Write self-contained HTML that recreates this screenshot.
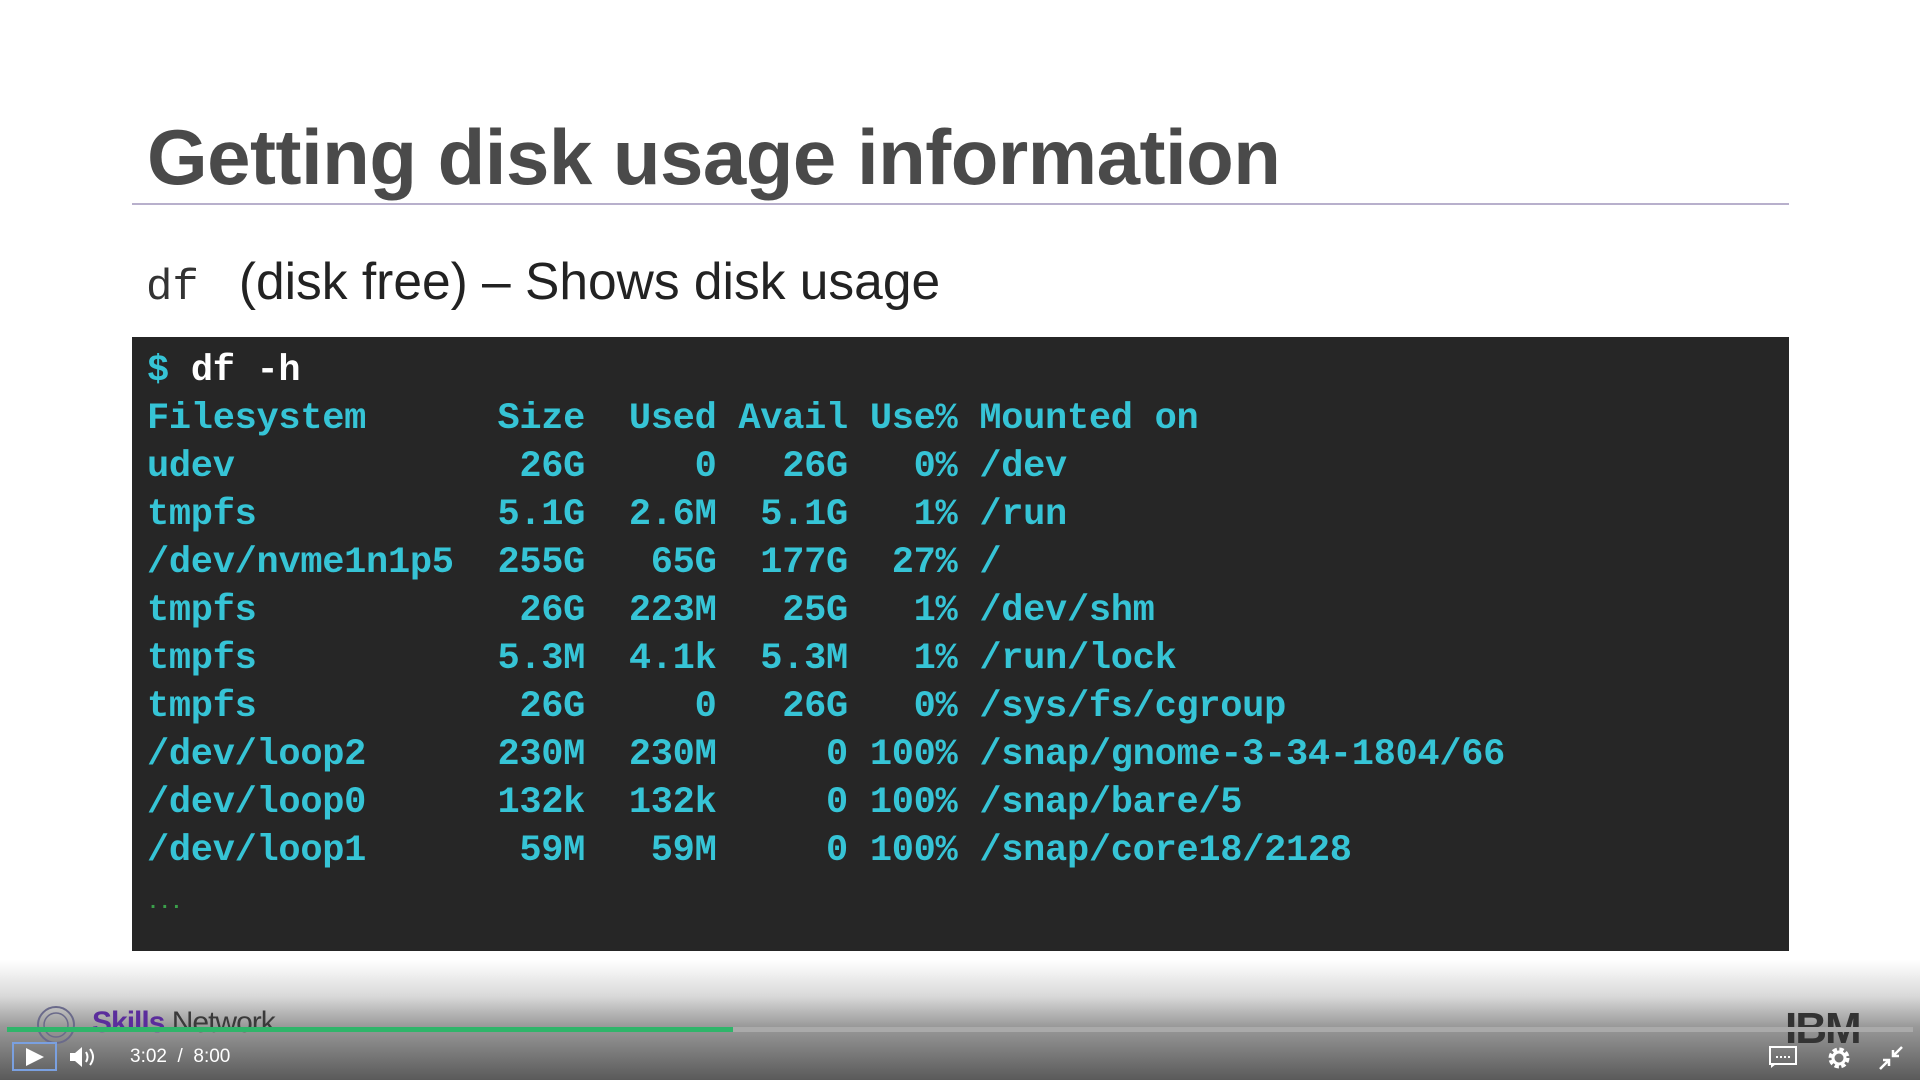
<!DOCTYPE html>
<html><head><style>
*{margin:0;padding:0;box-sizing:border-box}
body{width:1920px;height:1080px;background:#fff;position:relative;overflow:hidden;font-family:"Liberation Sans",sans-serif}
.title{position:absolute;left:147px;top:112px;font-size:78px;font-weight:bold;color:#4a4a4a;letter-spacing:-0.5px}
.rule{position:absolute;left:132px;top:203px;width:1657px;height:2px;background:#b8b0cc}
.sub{position:absolute;left:146px;top:251px;font-size:51.5px;color:#222}
.sub code{font-family:"Liberation Mono",monospace;font-size:44px;color:#333;margin-right:40px}
.term{position:absolute;left:132px;top:337px;width:1657px;height:614px;background:#262626}
pre{position:absolute;left:147px;top:347px;font-family:"Liberation Mono",monospace;font-weight:bold;font-size:37px;letter-spacing:-0.3px;line-height:48px;color:#36c4d6}
.w{color:#fff}
.g{color:#3aa04a;font-size:20px}
.bar{position:absolute;left:0;top:960px;width:1920px;height:120px;background:linear-gradient(#fff0 0%,#d9d9d9 30%,#9a9a9a 55%,#5a5a5a 100%)}
.prog{position:absolute;left:7px;top:1027px;width:1906px;height:5px;background:#aaa}
.prog i{position:absolute;left:0;top:0;width:726px;height:5px;background:#2fb56a}
.ctl{position:absolute;color:#fff;font-size:19px}
</style></head><body>
<div class="title">Getting disk usage information</div>
<div class="rule"></div>
<div class="sub"><code>df</code>(disk free) – Shows disk usage</div>
<div class="term"></div>
<pre><span>$</span> <span class="w">df -h</span>
Filesystem      Size  Used Avail Use% Mounted on
udev             26G     0   26G   0% /dev
tmpfs           5.1G  2.6M  5.1G   1% /run
/dev/nvme1n1p5  255G   65G  177G  27% /
tmpfs            26G  223M   25G   1% /dev/shm
tmpfs           5.3M  4.1k  5.3M   1% /run/lock
tmpfs            26G     0   26G   0% /sys/fs/cgroup
/dev/loop2      230M  230M     0 100% /snap/gnome-3-34-1804/66
/dev/loop0      132k  132k     0 100% /snap/bare/5
/dev/loop1       59M   59M     0 100% /snap/core18/2128
<span class="g">...</span></pre>
<div class="bar"></div>
<svg style="position:absolute;left:36px;top:1003px" width="40" height="44"><circle cx="20" cy="22" r="18" fill="none" stroke="#6a6a8a" stroke-width="2"/><circle cx="20" cy="22" r="12" fill="none" stroke="#6a6a8a" stroke-width="1.5"/></svg>
<div style="position:absolute;left:92px;top:1006px;font-size:30px;font-weight:bold;color:#5b2d9c;letter-spacing:-1px">Skills <span style="color:#3a3a3a;font-weight:normal">Network</span></div>
<div style="position:absolute;left:1785px;top:1004px;font-size:44px;font-weight:bold;color:#333;letter-spacing:-2px">IBM</div>
<div class="prog"><i></i></div>
<div style="position:absolute;left:12px;top:1042px;width:45px;height:29px;border:2px solid #7aa0e0"></div>
<svg style="position:absolute;left:24px;top:1047px" width="22" height="20"><path d="M2 1 L20 10 L2 19Z" fill="#fff"/></svg>
<svg style="position:absolute;left:68px;top:1045px" width="30" height="24"><path d="M2 8h5l7-6v20l-7-6H2z" fill="#fff"/><path d="M18 7q3 5 0 10M22 4q6 8 0 16" stroke="#fff" stroke-width="2" fill="none"/></svg>
<div class="ctl" style="left:130px;top:1046px">3:02 &nbsp;/ &nbsp;8:00</div>
<svg style="position:absolute;left:1768px;top:1045px" width="30" height="24"><rect x="2" y="2" width="26" height="17" fill="none" stroke="#fff" stroke-width="2"/><path d="M3 19v4l5-4" fill="#fff"/><path d="M8 12h14" stroke="#fff" stroke-dasharray="2 2" stroke-width="2"/></svg>
<svg style="position:absolute;left:1825px;top:1044px" width="28" height="28" viewBox="0 0 28 28"><circle cx="14" cy="14" r="8" fill="none" stroke="#fff" stroke-width="5" stroke-dasharray="4 2.3"/><circle cx="14" cy="14" r="6" fill="none" stroke="#fff" stroke-width="3"/></svg>
<svg style="position:absolute;left:1878px;top:1045px" width="26" height="26"><path d="M24 2l-9 9M15 5v6h6M2 24l9-9M5 15h6v6" stroke="#fff" stroke-width="2.5" fill="none"/></svg>
</body></html>
